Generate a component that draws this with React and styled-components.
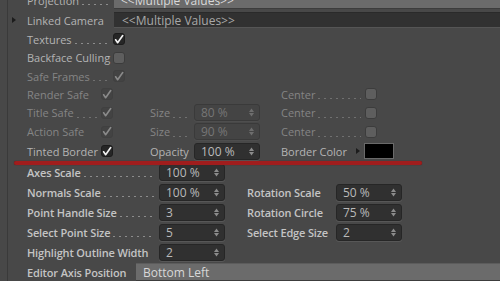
import React from 'react'
import styled, { createGlobalStyle } from 'styled-components'

const GlobalStyle = createGlobalStyle`
  html, body {
    margin: 0;
    padding: 0;
    background: #484848;
    overflow: hidden;
  }
  body {
    width: 500px;
    height: 281px;
    font-family: "Open Sans", "DejaVu Sans", sans-serif;
    font-size: 11px;
  }
`

const Panel = styled.div`
  position: relative;
  margin-left: 7px;
  margin-top: -10px;
  padding-left: 19px;
  border-left: 1px solid #3a3a3a;
  height: 300px;
`

const Row = styled.div`
  display: flex;
  align-items: center;
  height: ${p => p.$h || 19}px;
`

const Lower = styled.div`
  margin-top: 1px;
`

const Label = styled.div`
  display: flex;
  align-items: center;
  flex-shrink: 0;
  width: ${p => p.$w}px;
  white-space: nowrap;
  color: ${p => (p.$dim ? '#858585' : p.$bold ? '#c4c4c4' : '#b4b4b4')};
  font-weight: ${p => (p.$bold ? 600 : 400)};
  letter-spacing: ${p => (p.$bold ? '-0.15px' : '0')};
`

const Leader = styled.span`
  flex: 1;
  min-width: 0;
  height: 1px;
  margin: 9px 4px 0 3px;
  background-image: linear-gradient(to right, ${p => (p.$dim ? '#707070' : '#8c8c8c')} 2px, transparent 2px);
  background-size: 6px 1px;
  background-repeat: repeat-x;
`

const Gap = styled.div`
  flex-shrink: 0;
  width: ${p => p.$w}px;
`

const Expander = styled.span`
  width: 0;
  height: 0;
  margin-left: -15px;
  margin-right: 11px;
  border-left: 4px solid #1c1c1c;
  border-top: 3.5px solid transparent;
  border-bottom: 3.5px solid transparent;
`

const Dropdown = styled.div`
  flex: 1;
  display: flex;
  align-items: center;
  box-sizing: border-box;
  height: ${p => (p.$dark ? 16 : 18)}px;
  padding-left: ${p => (p.$dark ? 8 : 7)}px;
  background: ${p => (p.$dark ? '#313131' : '#6b6b6b')};
  border-top: 1px solid ${p => (p.$dark ? '#2a2a2a' : '#5c5c5c')};
  border-bottom: 1px solid ${p => (p.$dark ? '#555555' : '#3c3c3c')};
  color: ${p => (p.$dark ? '#a8a8a8' : '#d8d8d8')};
  font-size: 12px;
  white-space: nowrap;
`

const Box = styled.div`
  flex-shrink: 0;
  box-sizing: border-box;
  width: 12px;
  height: 12px;
  border-radius: 3px;
  display: flex;
  align-items: center;
  justify-content: center;
  background: ${p => ({ on: '#262626', dim: '#434343', off: '#5e5e5e' }[p.$state])};
  border: 1px solid ${p => ({ on: '#1c1c1c', dim: '#404040', off: '#3c3c3c' }[p.$state])};
`

const Field = styled.div`
  flex-shrink: 0;
  position: relative;
  box-sizing: border-box;
  width: 66px;
  height: 17px;
  display: flex;
  align-items: center;
  padding-left: 6px;
  border-radius: 3px;
  background: ${p => (p.$dim ? '#444444' : '#303030')};
  border: 1px solid ${p => (p.$dim ? '#3a3a3a' : '#262626')};
  box-shadow: 0 1px 0 ${p => (p.$dim ? '#4e4e4e' : '#575757')};
  color: ${p => (p.$dim ? '#767676' : '#bababa')};
  font-size: 12px;
`

const Spin = styled.svg`
  position: absolute;
  right: 5px;
  top: 3px;
`

const Swatch = styled.div`
  width: 30px;
  height: 16px;
  box-sizing: border-box;
  background: #000;
  border: 1px solid #6a6a6a;
  margin-left: 4px;
`

const SmallArrow = styled.span`
  width: 0;
  height: 0;
  border-left: 4px solid #1c1c1c;
  border-top: 3.5px solid transparent;
  border-bottom: 3.5px solid transparent;
`

const RedLine = styled.div`
  position: absolute;
  left: 6px;
  top: 171px;
  width: 408px;
  height: 4px;
  border-radius: 2px;
  background: #a01d1d;
  box-shadow: 0 0 1px #5a1010;
`

function Check({ state }) {
  return (
    <Box $state={state}>
      {state !== 'off' && (
        <svg width="11" height="11" viewBox="0 0 11 11">
          <path
            d="M1.8 5.8 L4 9 L9.6 1.2"
            fill="none"
            stroke={state === 'on' ? '#f2f2f2' : '#8a8a8a'}
            strokeWidth="1.8"
            strokeLinecap="round"
            strokeLinejoin="round"
          />
        </svg>
      )}
    </Box>
  )
}

function NumField({ value, dim }) {
  const c = dim ? '#6e6e6e' : '#8c8c8c'
  return (
    <Field $dim={dim}>
      {value}
      <Spin width="5" height="9" viewBox="0 0 5 9">
        <polygon points="0,4 2.5,0.5 5,4" fill={c} />
        <polygon points="0,5 2.5,8.5 5,5" fill={c} />
      </Spin>
    </Field>
  )
}

function Lead({ w, text, dim, bold, dots = true }) {
  return (
    <Label $w={w} $dim={dim} $bold={bold}>
      {text}
      {dots && <Leader $dim={dim} />}
    </Label>
  )
}

const safeRows = [
  { name: 'Render Safe', dots: false, size: null },
  { name: 'Title Safe', dots: true, size: '80 %' },
  { name: 'Action Safe', dots: false, size: '90 %' },
]

const lowerRows = [
  ['Axes Scale', '100 %', null, null],
  ['Normals Scale', '100 %', 'Rotation Scale', '50 %'],
  ['Point Handle Size', '3', 'Rotation Circle', '75 %'],
  ['Select Point Size', '5', 'Select Edge Size', '2'],
  ['Highlight Outline Width', '2', null, null],
]

export default function App() {
  return (
    <>
      <GlobalStyle />
      <Panel>
        <Row $h={20}>
          <Lead w={87} text="Projection" />
          <Dropdown>{'<<Multiple Values>>'}</Dropdown>
        </Row>
        <Row $h={20}>
          <Expander />
          <Label $w={87}>Linked Camera</Label>
          <Dropdown $dark>{'<<Multiple Values>>'}</Dropdown>
        </Row>
        <Row $h={18}>
          <Lead w={86} text="Textures" />
          <Check state="on" />
        </Row>
        <Row $h={19}>
          <Lead w={86} text="Backface Culling" dots={false} />
          <Check state="off" />
        </Row>
        <Row $h={18}>
          <Lead w={86} text="Safe Frames" dim />
          <Check state="dim" />
        </Row>

        {safeRows.map(r => (
          <Row key={r.name} $h={r.size ? 19 : 18}>
            <Lead w={74} text={r.name} dim dots={r.dots} />
            <Check state="dim" />
            <Gap $w={37} />
            {r.size ? (
              <>
                <Lead w={44} text="Size" dim />
                <NumField value={r.size} dim />
              </>
            ) : (
              <Gap $w={110} />
            )}
            <Gap $w={21} />
            <Lead w={84} text="Center" dim />
            <Box $state="off" />
          </Row>
        ))}

        <Row $h={20}>
          <Lead w={74} text="Tinted Border" dots={false} />
          <Check state="on" />
          <Gap $w={37} />
          <Lead w={44} text="Opacity" dots={false} />
          <NumField value="100 %" />
          <Gap $w={21} />
          <Lead w={75} text="Border Color" dots={false} />
          <SmallArrow />
          <Swatch />
        </Row>

        <Lower>
          {lowerRows.map(([a, av, b, bv]) => (
            <Row key={a} $h={20}>
              <Lead w={132} text={a} bold dots={a !== 'Highlight Outline Width'} />
              <NumField value={av} />
              {b && (
                <>
                  <Gap $w={22} />
                  <Lead w={89} text={b} bold dots={false} />
                  <NumField value={bv} />
                </>
              )}
            </Row>
          ))}
          <Row $h={20}>
            <Lead w={109} text="Editor Axis Position" bold dots={false} />
            <Dropdown>Bottom Left</Dropdown>
          </Row>
        </Lower>

        <RedLine />
      </Panel>
    </>
  )
}
